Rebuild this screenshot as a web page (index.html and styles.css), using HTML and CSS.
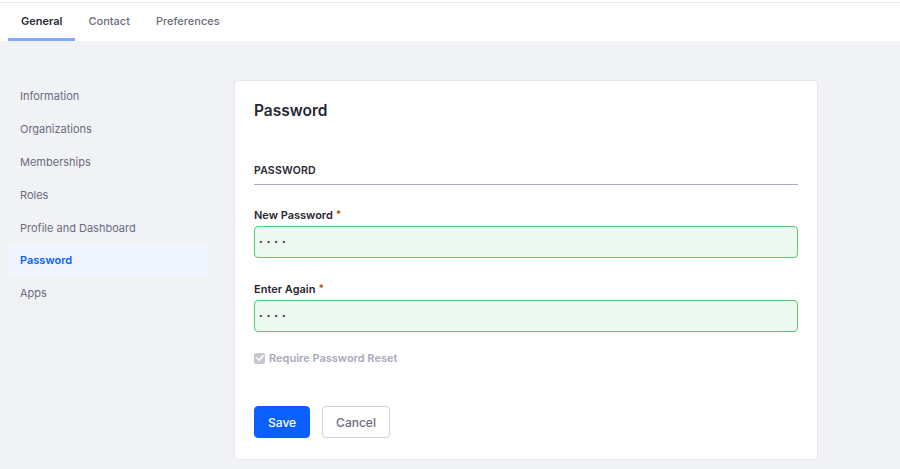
FILE: index.html
```html
<!DOCTYPE html>
<html>
<head>
<meta charset="utf-8">
<link rel="stylesheet" href="styles.css">
</head>
<body>
<nav class="tabs">
  <a class="tab active">General</a>
  <a class="tab">Contact</a>
  <a class="tab">Preferences</a>
</nav>
<main class="layout">
  <ul class="side">
    <li class="side-item">Information</li>
    <li class="side-item">Organizations</li>
    <li class="side-item">Memberships</li>
    <li class="side-item">Roles</li>
    <li class="side-item">Profile and Dashboard</li>
    <li class="side-item active">Password</li>
    <li class="side-item">Apps</li>
  </ul>
  <section class="card">
    <h2 class="card-title">Password</h2>
    <h3 class="sheet-subtitle">PASSWORD</h3>
    <div class="group">
      <label class="label">New Password<span class="req">*</span></label>
      <div class="input">••••</div>
    </div>
    <div class="group">
      <label class="label">Enter Again<span class="req">*</span></label>
      <div class="input">••••</div>
    </div>
    <div class="check-row">
      <span class="checkbox"><svg width="10" height="10" viewBox="0 0 10 10"><path d="M2 5.2 L4.1 7.3 L8 2.9" fill="none" stroke="#fff" stroke-width="1.6" stroke-linecap="round" stroke-linejoin="round"/></svg></span>
      <span class="check-label">Require Password Reset</span>
    </div>
    <div class="actions">
      <button class="btn primary">Save</button>
      <button class="btn secondary">Cancel</button>
    </div>
  </section>
</main>
</body>
</html>
```

FILE: styles.css
```css
* { box-sizing: border-box; }
html, body { margin: 0; padding: 0; }
body {
  background: #f1f2f5;
  font-family: Inter, "Noto Sans", sans-serif;
  color: #272833;
  height: 469px;
  overflow: hidden;
}
.tabs {
  background: #fff;
  border-top: 2px solid #fff;
  display: flex;
  padding-left: 8px;
  height: 41px;
  box-shadow: inset 0 1px 0 #ebecf0;
}
.tab {
  display: flex;
  align-items: center;
  padding: 1px 13px 0;
  font-size: 11px;
  font-weight: 500;
  color: #6b6c7e;
  height: 39px;
  border-bottom: 3px solid transparent;
}
.tab.active {
  color: #272833;
  font-weight: 600;
  border-bottom-color: #80acff;
}
.layout {
  display: flex;
  align-items: flex-start;
  padding: 39px 0 0 8px;
  gap: 26px;
}
.side {
  list-style: none;
  margin: 0;
  padding: 0;
  width: 200px;
  display: flex;
  flex-direction: column;
  gap: 1px;
}
.side-item {
  height: 32px;
  display: flex;
  align-items: center;
  padding-left: 12px;
  font-size: 11px;
  color: #6b6c7e;
  border-radius: 4px;
}
.side-item.active {
  background: #f0f5ff;
  color: #0b5fff;
  font-weight: 600;
  margin-top: -1px;
}
.card {
  width: 584px;
  background: #fff;
  border: 1px solid #e7e7ed;
  border-radius: 4px;
  padding: 20px 19px 21px 19px;
}
.card-title {
  margin: 0;
  font-size: 15.5px;
  line-height: 20px;
  font-weight: 600;
  color: #272833;
}
.sheet-subtitle {
  margin: 42px 0 0;
  font-size: 10.5px;
  line-height: 16px;
  font-weight: 600;
  color: #272833;
  padding-bottom: 5px;
  border-bottom: 1px solid #a7a9bc;
  letter-spacing: 0.2px;
}
.group { margin-top: 22px; }
.group + .group { margin-top: 23px; }
.label {
  display: block;
  font-size: 11px;
  line-height: 16px;
  height: 16px;
  font-weight: 600;
  color: #272833;
  margin-bottom: 3px;
}
.req {
  color: #b95000;
  margin-left: 3px;
  font-size: 10px;
  font-weight: 700;
  position: relative;
  top: -1px;
}
.input {
  height: 32px;
  background: #edf9f0;
  border: 1px solid #5aca75;
  border-radius: 4px;
  display: flex;
  align-items: center;
  padding-left: 4px;
  font-size: 6.5px;
  letter-spacing: 4px;
  color: #272833;
}
.check-row {
  margin-top: 18px;
  display: flex;
  align-items: center;
  height: 16px;
  gap: 4px;
}
.checkbox {
  width: 11px;
  height: 11px;
  border-radius: 2px;
  background: #c6c7d1;
  display: flex;
  align-items: center;
  justify-content: center;
}
.check-label {
  font-size: 11px;
  font-weight: 600;
  color: #a7a9bc;
}
.actions {
  margin-top: 40px;
  display: flex;
  gap: 12px;
}
.btn {
  height: 32px;
  border-radius: 4px;
  font-family: inherit;
  font-size: 12px;
  font-weight: 500;
  padding: 0 13px;
  cursor: pointer;
}
.btn.primary {
  background: #0b5fff;
  border: 1px solid #0b5fff;
  color: #fff;
}
.btn.secondary {
  background: #fff;
  border: 1px solid #cdced9;
  color: #6b6c7e;
}
```
